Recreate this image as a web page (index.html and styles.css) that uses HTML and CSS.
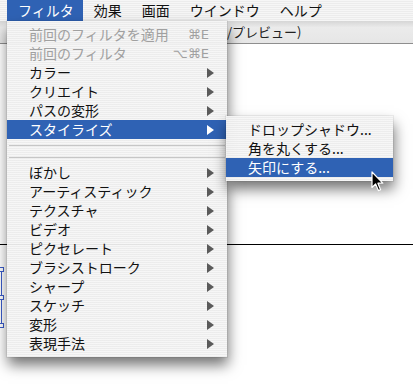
FILE: index.html
```html
<!DOCTYPE html>
<html lang="ja">
<head>
    <meta charset="UTF-8">
    <title>フィルタ</title>
    <link rel="stylesheet" href="styles.css">
</head>
<body>
    <div class="screen">
        <div class="menubar">
            <span class="menubar-item active">フィルタ</span>
            <span class="menubar-item">効果</span>
            <span class="menubar-item">画面</span>
            <span class="menubar-item">ウインドウ</span>
            <span class="menubar-item">ヘルプ</span>
        </div>

        <div class="doc">
            <div class="doc-title">/プレビュー)</div>
            <div class="canvas">
                <div class="guide"></div>
                <div class="selection">
                    <span class="handle h1"></span>
                    <span class="handle h2"></span>
                    <span class="handle h3"></span>
                </div>
            </div>
        </div>

        <div class="menu">
            <div class="menu-item disabled"><span class="label">前回のフィルタを適用</span><span class="shortcut">⌘E</span></div>
            <div class="menu-item disabled"><span class="label">前回のフィルタ</span><span class="shortcut">⌥⌘E</span></div>
            <div class="menu-item"><span class="label">カラー</span><span class="arrow"></span></div>
            <div class="menu-item"><span class="label">クリエイト</span><span class="arrow"></span></div>
            <div class="menu-item"><span class="label">パスの変形</span><span class="arrow"></span></div>
            <div class="menu-item selected"><span class="label">スタイライズ</span><span class="arrow"></span></div>
            <div class="sep"></div>
            <div class="sep"></div>
            <div class="menu-item"><span class="label">ぼかし</span><span class="arrow"></span></div>
            <div class="menu-item"><span class="label">アーティスティック</span><span class="arrow"></span></div>
            <div class="menu-item"><span class="label">テクスチャ</span><span class="arrow"></span></div>
            <div class="menu-item"><span class="label">ビデオ</span><span class="arrow"></span></div>
            <div class="menu-item"><span class="label">ピクセレート</span><span class="arrow"></span></div>
            <div class="menu-item"><span class="label">ブラシストローク</span><span class="arrow"></span></div>
            <div class="menu-item"><span class="label">シャープ</span><span class="arrow"></span></div>
            <div class="menu-item"><span class="label">スケッチ</span><span class="arrow"></span></div>
            <div class="menu-item"><span class="label">変形</span><span class="arrow"></span></div>
            <div class="menu-item"><span class="label">表現手法</span><span class="arrow"></span></div>
        </div>

        <div class="menu submenu">
            <div class="menu-item"><span class="label">ドロップシャドウ...</span></div>
            <div class="menu-item"><span class="label">角を丸くする...</span></div>
            <div class="menu-item selected"><span class="label">矢印にする...</span></div>
        </div>

        <svg class="cursor" width="14" height="22" viewBox="0 0 14 22">
            <path d="M1 1 L1 16.5 L4.6 13 L7.4 19.6 L9.6 18.7 L6.9 12.2 L11.8 12.2 Z" fill="#000" stroke="#fff" stroke-width="1.2" stroke-linejoin="round"/>
        </svg>
    </div>
</body>
</html>
```

FILE: styles.css
```css
body {
    margin: 0;
    background-color: #ffffff;
    font-family: "Noto Sans CJK JP", "DejaVu Sans", sans-serif;
    color: #111111;
}

.screen {
    position: relative;
    width: 413px;
    height: 384px;
    overflow: hidden;
}

.menubar {
    display: flex;
    height: 21px;
    padding-left: 7px;
    background: repeating-linear-gradient(#f6f6f6 0px, #f6f6f6 1px, #ececec 1px, #ececec 2px);
    font-size: 14px;
    line-height: 21px;
}

    .menubar-item {
        padding: 0 9px 0 11px;
    }

    .menubar-item.active {
        background-color: #2f62b4;
        color: #ffffff;
    }

.doc-title {
    height: 22px;
    padding-left: 227px;
    border-bottom: 1px solid #8e8e8e;
    background: linear-gradient(#d6d6d6, #ebebeb 30%, #e6e6e6);
    font-size: 13px;
    line-height: 22px;
    color: #222222;
    white-space: nowrap;
}

.canvas {
    padding-top: 200px;
}

.guide {
    height: 1px;
    background-color: #000000;
}

.selection {
    position: relative;
    width: 0;
    height: 56px;
    margin: 24px 0 0 1px;
    border-left: 1px solid #3b5cc9;
}

    .handle {
        position: absolute;
        left: -3px;
        width: 3px;
        height: 3px;
        border: 1px solid #3b5cc9;
        background-color: #ffffff;
    }

    .h1 { top: -2px; }
    .h2 { top: 26px; }
    .h3 { top: 54px; }

.menu {
    position: absolute;
    left: 7px;
    top: 21px;
    width: 220px;
    padding: 4px 0;
    background: repeating-linear-gradient(rgba(246, 246, 246, 0.96) 0px, rgba(246, 246, 246, 0.96) 1px, rgba(236, 236, 236, 0.96) 1px, rgba(236, 236, 236, 0.96) 2px);
    box-shadow: 0 0 0 1px rgba(0, 0, 0, 0.06), 1px 8px 13px rgba(0, 0, 0, 0.55);
    font-size: 14px;
}

    .menu-item {
        display: flex;
        align-items: center;
        height: 19px;
        padding: 0 13px 0 22px;
        line-height: 19px;
        white-space: nowrap;
    }

    .menu-item .label {
        flex: 1;
    }

    .menu-item.disabled {
        color: #a0a0a0;
    }

    .menu-item.selected {
        background-color: #2f62b4;
        color: #ffffff;
    }

    .shortcut {
        margin-right: 5px;
        font-family: "DejaVu Sans", sans-serif;
        font-size: 13px;
    }

    .arrow {
        width: 0;
        height: 0;
        border-left: 7px solid #5a5a5a;
        border-top: 5px solid transparent;
        border-bottom: 5px solid transparent;
    }

    .selected .arrow {
        border-left-color: #ffffff;
    }

    .sep {
        display: flex;
        align-items: center;
        height: 12px;
    }

        .sep::after {
            content: "";
            flex: 1;
            height: 1px;
            margin: 0 2px;
            background-color: #c6c6c6;
        }

.submenu {
    left: 226px;
    top: 116px;
    width: 167px;
}

.cursor {
    position: absolute;
    left: 371px;
    top: 171px;
}
```
